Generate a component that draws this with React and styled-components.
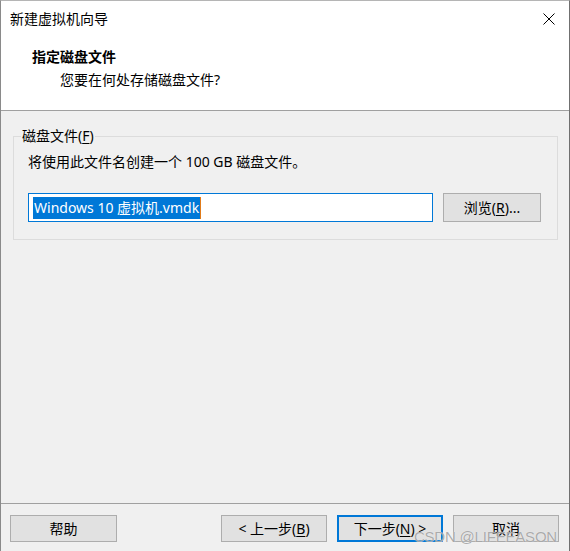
import { createGlobalStyle, styled } from 'styled-components';

const GlobalStyle = createGlobalStyle`
  html, body {
    margin: 0;
    padding: 0;
    background: #f0f0f0;
  }
  * {
    box-sizing: border-box;
  }
`;

const fontStack = `"Noto Sans", "Noto Sans CJK SC", sans-serif`;

const Window = styled.div`
  position: relative;
  width: 570px;
  height: 551px;
  display: flex;
  flex-direction: column;
  background: #f0f0f0;
  border-top: 1px solid #b5b5b5;
  border-left: 1px solid #8a8a8a;
  border-right: 1px solid #707070;
  font-family: ${fontStack};
  font-size: 14px;
  color: #000;
  overflow: hidden;
`;

const TitleBar = styled.div`
  height: 35px;
  display: flex;
  align-items: center;
  justify-content: space-between;
  padding: 0 14px 0 9px;
  background: #fff;
`;

const TitleText = styled.span`
  line-height: 20px;
`;

const CloseButton = styled.svg`
  width: 12px;
  height: 12px;
  display: block;
`;

const Header = styled.div`
  background: #fff;
  padding: 11px 0 20px 31px;
  border-bottom: 1px solid #a0a0a0;
`;

const HeaderTitle = styled.div`
  font-weight: 700;
  line-height: 20px;
`;

const HeaderSub = styled.div`
  margin: 3px 0 0 28px;
  line-height: 20px;
`;

const Body = styled.div`
  flex: 1;
  padding: 15px 11px 0 12px;
`;

const Group = styled.fieldset`
  margin: 0;
  padding: 6px 16px 17px 14px;
  border: 1px solid #dcdcdc;
`;

const Legend = styled.legend`
  margin-left: -7px;
  padding: 0 1px;
  line-height: 20px;
`;

const Info = styled.div`
  line-height: 20px;
`;

const FileRow = styled.div`
  margin-top: 21px;
  display: flex;
  align-items: center;
  gap: 10px;
`;

const FileInput = styled.div`
  flex: 1;
  height: 29px;
  display: flex;
  align-items: center;
  padding: 0 4px;
  background: #fff;
  border: 1px solid #0078d7;
`;

const Selection = styled.span`
  background: #0078d7;
  color: #fff;
  line-height: 22px;
  padding: 0 1px;
  border-right: 1px solid #e07b1a;
`;

const Button = styled.button`
  width: ${p => p.$width || 106}px;
  height: ${p => p.$height || 27}px;
  padding: 0;
  font-family: ${fontStack};
  font-size: 14px;
  color: #000;
  background: #e1e1e1;
  border: ${p => (p.$default ? '2px solid #0078d7' : '1px solid #adadad')};
  line-height: 20px;
`;

const Key = styled.span`
  text-decoration: underline;
  text-underline-offset: 2px;
`;

const Footer = styled.div`
  height: 48px;
  display: flex;
  align-items: flex-start;
  padding: 11px 10px 0 9px;
  border-top: 1px solid #a0a0a0;
`;

const Spacer = styled.div`
  flex: 1;
`;

const NavButtons = styled.div`
  display: flex;
  gap: 10px;
`;

const Watermark = styled.div`
  position: absolute;
  right: 12px;
  bottom: 6px;
  font-family: "Liberation Sans", sans-serif;
  font-size: 15px;
  color: rgba(150, 150, 150, 0.8);
  text-shadow: 0 0 1px rgba(255, 255, 255, 0.9);
  letter-spacing: -0.2px;
  pointer-events: none;
`;

const App = () => {
  return (
    <>
      <GlobalStyle />
      <Window>
        <TitleBar>
          <TitleText>新建虚拟机向导</TitleText>
          <CloseButton viewBox="0 0 12 12">
            <path d="M0.5 0.5 L11.5 11.5 M11.5 0.5 L0.5 11.5" stroke="#000" strokeWidth="1" fill="none" />
          </CloseButton>
        </TitleBar>
        <Header>
          <HeaderTitle>指定磁盘文件</HeaderTitle>
          <HeaderSub>您要在何处存储磁盘文件?</HeaderSub>
        </Header>
        <Body>
          <Group>
            <Legend>
              磁盘文件(<Key>F</Key>)
            </Legend>
            <Info>将使用此文件名创建一个 100 GB 磁盘文件。</Info>
            <FileRow>
              <FileInput>
                <Selection>Windows 10 虚拟机.vmdk</Selection>
              </FileInput>
              <Button $width={98} $height={29}>
                浏览(<Key>R</Key>)...
              </Button>
            </FileRow>
          </Group>
        </Body>
        <Footer>
          <Button $width={107}>帮助</Button>
          <Spacer />
          <NavButtons>
            <Button>
              &lt; 上一步(<Key>B</Key>)
            </Button>
            <Button $default>
              下一步(<Key>N</Key>) &gt;
            </Button>
            <Button>取消</Button>
          </NavButtons>
        </Footer>
        <Watermark>CSDN @LIFEEASON</Watermark>
      </Window>
    </>
  );
};

export default App;
